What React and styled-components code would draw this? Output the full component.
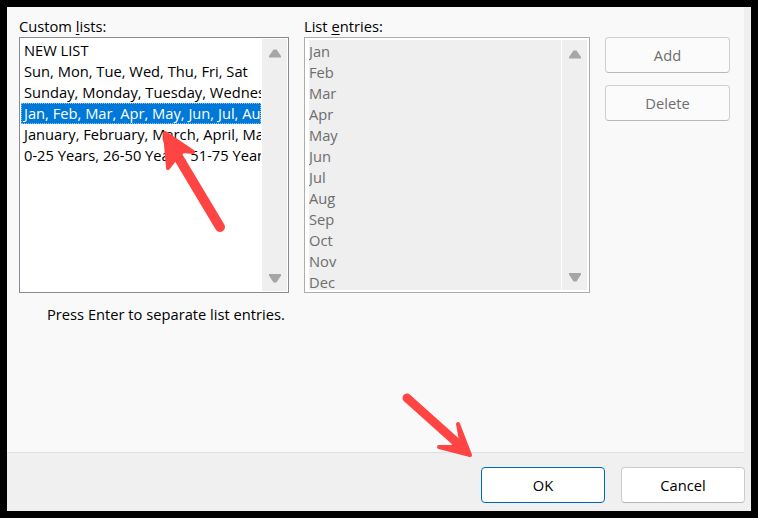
import React from "react";
import styled, { createGlobalStyle } from "styled-components";

const Global = createGlobalStyle`
  html, body { margin: 0; padding: 0; background: #000; }
`;

const Frame = styled.div`
  position: relative;
  width: 758px;
  height: 518px;
  box-sizing: border-box;
  padding: 7px;
  background: #000;
  font-family: "Open Sans", "Noto Sans", sans-serif;
  font-size: 14.7px;
  color: #000;
  overflow: hidden;
`;

const Dialog = styled.div`
  display: flex;
  flex-direction: column;
  height: 100%;
  background: #f0f0f0;
`;

const Panel = styled.div`
  height: 446px;
  margin-right: 7px;
  box-sizing: border-box;
  padding: 10px 0 0 12px;
  background: #f9f9f9;
  border-bottom: 1px solid #dfdfdf;
`;

const Columns = styled.div`
  display: flex;
  align-items: flex-start;
`;

const Column = styled.div`
  display: flex;
  flex-direction: column;
  margin-right: ${(p) => p.$gap}px;
`;

const Label = styled.label`
  height: 20px;
  line-height: 18px;
`;

const Key = styled.span`
  text-decoration: underline;
  text-underline-offset: 2px;
`;

const ListBox = styled.div`
  display: flex;
  box-sizing: border-box;
  width: ${(p) => p.$width}px;
  height: 256px;
  padding: ${(p) => (p.$disabled ? "2px 2px 2px 4px" : "1px")};
  background: #fff;
  border: 1px solid ${(p) => (p.$disabled ? "#adadad" : "#8a8a96")};
`;

const Rows = styled.div`
  flex: 1;
  min-width: 0;
  overflow: hidden;
  padding-top: 1px;
  margin-right: 1px;
  background: ${(p) => (p.$disabled ? "#efefef" : "#fff")};
  color: ${(p) => (p.$disabled ? "#6d6d6d" : "#000")};
`;

const Row = styled.div`
  height: 21px;
  line-height: 21px;
  padding-left: ${(p) => (p.$disabled ? 0 : 3)}px;
  white-space: nowrap;
  overflow: hidden;
  background: ${(p) => (p.$selected ? "#0078d7" : "transparent")};
  color: ${(p) => (p.$selected ? "#fff" : "inherit")};
  outline: ${(p) => (p.$selected ? "1px dotted #8fc4ee" : "none")};
  outline-offset: -1px;
`;

const Scrollbar = styled.div`
  display: flex;
  flex-direction: column;
  align-items: center;
  justify-content: space-between;
  flex: 0 0 25px;
  box-sizing: border-box;
  padding: 10px 0 8px;
  background: #efefef;
`;

const Hint = styled.p`
  margin: 11px 0 0 28px;
  line-height: 20px;
`;

const ButtonColumn = styled.div`
  display: flex;
  flex-direction: column;
  gap: 12px;
  padding-top: 20px;
`;

const Button = styled.button`
  box-sizing: border-box;
  width: ${(p) => p.$width || 124}px;
  height: 36px;
  padding: 0;
  font: inherit;
  background: ${(p) => (p.$muted ? "#fbfbfb" : "#fff")};
  color: ${(p) => (p.$muted ? "#6d6d6d" : "#000")};
  border: 1px solid ${(p) => (p.$primary ? "#0067c0" : p.$muted ? "#cfcfcf" : "#cccccc")};
  border-bottom-color: ${(p) => (p.$primary ? "#0067c0" : "#b8b8b8")};
  border-radius: 4px;
`;

const Footer = styled.div`
  flex: 1;
  display: flex;
  justify-content: flex-end;
  gap: 16px;
  padding: 14px 6px 0 0;
`;

const Overlay = styled.svg`
  position: absolute;
  inset: 0;
  pointer-events: none;
`;

const Arrow = styled.g`
  fill: #ff4444;
  stroke: #ff4444;
  stroke-width: 4;
  stroke-linejoin: round;
  stroke-linecap: round;
`;

const Triangle = ({ down }) => (
  <svg width="12" height="9" viewBox="0 0 12 9">
    <path
      d={down ? "M0 0H12V1.5L7.5 8.5H4.5L0 1.5Z" : "M4.5 .5H7.5L12 7V8.5H0V7Z"}
      fill="#a6a6a6"
    />
  </svg>
);

const customLists = [
  "NEW LIST",
  "Sun, Mon, Tue, Wed, Thu, Fri, Sat",
  "Sunday, Monday, Tuesday, Wednesday, Thursday, Friday, Saturday",
  "Jan, Feb, Mar, Apr, May, Jun, Jul, Aug, Sep, Oct, Nov, Dec",
  "January, February, March, April, May, June, July, August",
  "0-25 Years, 26-50 Years, 51-75 Years, 76-100 Years",
];

const entries = ["Jan", "Feb", "Mar", "Apr", "May", "Jun", "Jul", "Aug", "Sep", "Oct", "Nov", "Dec"];

export default function App() {
  return (
    <Frame>
      <Global />
      <Dialog>
        <Panel>
          <Columns>
            <Column $gap={15}>
              <Label>Custom <Key>l</Key>ists:</Label>
              <ListBox $width={270}>
                <Rows>
                  {customLists.map((item, i) => (
                    <Row key={item} $selected={i === 3}>{item}</Row>
                  ))}
                </Rows>
                <Scrollbar><Triangle /><Triangle down /></Scrollbar>
              </ListBox>
              <Hint>Press Enter to separate list entries.</Hint>
            </Column>
            <Column $gap={15}>
              <Label>List <Key>e</Key>ntries:</Label>
              <ListBox $width={286} $disabled>
                <Rows $disabled>
                  {entries.map((item) => (
                    <Row key={item} $disabled>{item}</Row>
                  ))}
                </Rows>
                <Scrollbar><Triangle /><Triangle down /></Scrollbar>
              </ListBox>
            </Column>
            <ButtonColumn>
              <Button $muted $width={125}>Add</Button>
              <Button $muted $width={125}>Delete</Button>
            </ButtonColumn>
          </Columns>
        </Panel>
        <Footer>
          <Button $primary>OK</Button>
          <Button>Cancel</Button>
        </Footer>
      </Dialog>
      <Overlay width="758" height="518" viewBox="0 0 758 518">
        <Arrow>
          <path d="M220 227L168 140" fill="none" strokeWidth="10" />
          <path d="M165 133L168 168L175 159L183 151L193 152Z" />
        </Arrow>
        <Arrow>
          <path d="M407 398L464 449" fill="none" strokeWidth="9" />
          <path d="M470 455L458 424L461 441L452 447L439 447Z" />
        </Arrow>
      </Overlay>
    </Frame>
  );
}
